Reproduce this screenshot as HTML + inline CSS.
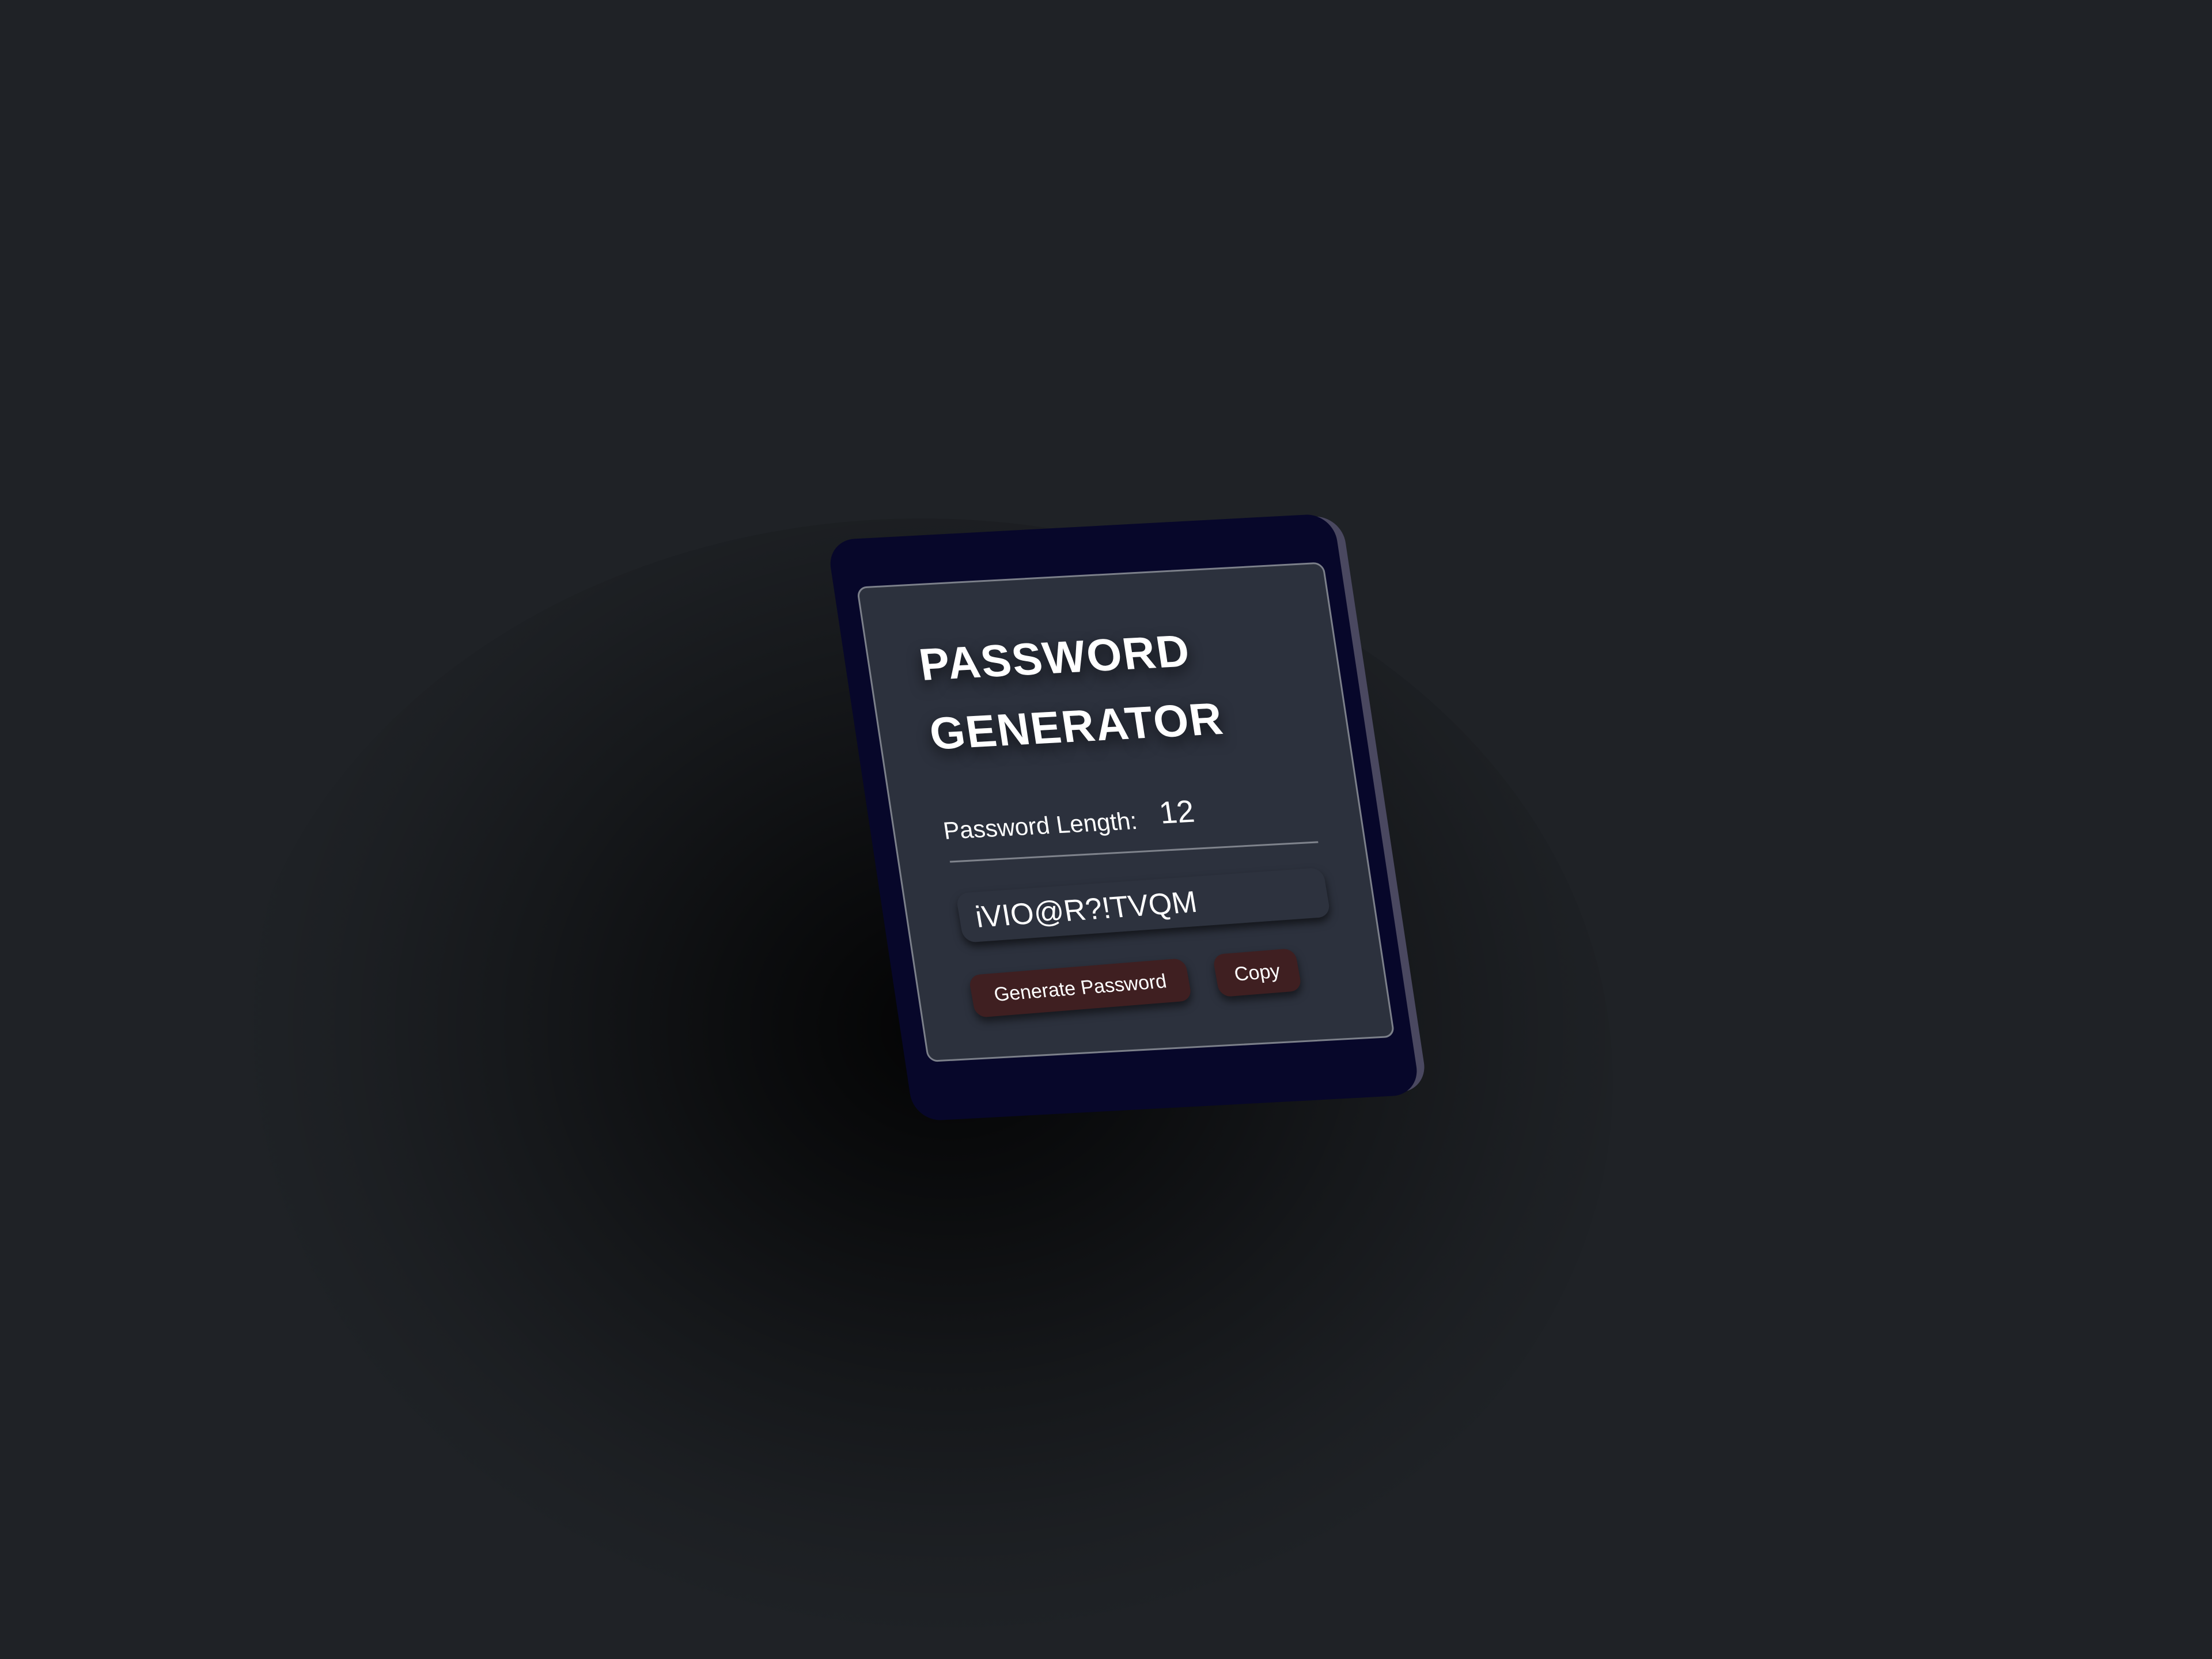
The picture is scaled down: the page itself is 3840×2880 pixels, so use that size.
<!DOCTYPE html>
<html><head><meta charset="utf-8"><style>
html,body{margin:0;padding:0;width:3840px;height:2880px;overflow:hidden;}
body{position:relative;background:#1f2226;font-family:"Liberation Sans",sans-serif;}
.shadow{position:absolute;left:400px;top:900px;width:2400px;height:1960px;border-radius:50%;
background:radial-gradient(ellipse at 52% 45%,rgba(0,0,0,0.9) 0%,rgba(0,0,0,0.6) 22%,rgba(0,0,0,0.3) 42%,rgba(0,0,0,0.1) 58%,rgba(0,0,0,0.03) 66%,rgba(0,0,0,0) 71%);}
.card{position:absolute;left:1435px;top:938px;width:880px;height:1010px;transform-origin:0 0;
transform:matrix(0.999,-0.0534,0.1505,0.999,0,0);}
.side{position:absolute;left:14px;top:4px;width:880px;height:1000px;background:#4a4860;border-radius:48px;}
.outer{position:absolute;left:0;top:0;width:880px;height:1010px;background:#07072a;border-radius:48px;}
.inner{position:absolute;left:39px;top:83px;width:806px;height:820px;background:#2c313d;
border:3px solid #7c808a;border-radius:18px;}
.t{position:absolute;color:#fff;white-space:nowrap;}
.title{font-weight:bold;font-size:78px;letter-spacing:2px;text-shadow:0 10px 24px rgba(0,0,0,0.6);}
.line{position:absolute;left:87px;top:478px;width:640px;height:3px;background:#7f838c;}
.pw{position:absolute;left:89px;top:529px;width:640px;height:86px;background:#2d323e;border-radius:22px;
box-shadow:0 8px 14px rgba(0,0,0,0.55);transform:rotate(-1deg);}
.btn{position:absolute;background:#3f1f21;border-radius:20px;box-shadow:0 8px 14px rgba(0,0,0,0.5);
color:#fff;font-size:34px;text-align:center;transform:rotate(-1.5deg);}
</style></head><body>
<div class="shadow"></div>
<div class="card">
  <div class="side"></div>
  <div class="outer"></div>
  <div class="inner">
    <div class="t title" style="left:86px;top:92px;">PASSWORD</div>
    <div class="t title" style="left:86px;top:212px;">GENERATOR</div>
    <div class="t" style="left:84px;top:402px;font-size:42px;">Password Length:</div>
    <div class="t" style="left:461px;top:384px;font-size:54px;">12</div>
    <div class="line"></div>
    <div class="pw"><div class="t" style="left:28px;top:14px;font-size:52px;">iVIO@R?!TVQM</div></div>
    <div class="btn" style="left:90px;top:672px;width:378px;height:74px;line-height:74px;">Generate Password</div>
    <div class="btn" style="left:516px;top:662px;width:144px;height:74px;line-height:74px;">Copy</div>
  </div>
</div>
</body></html>
